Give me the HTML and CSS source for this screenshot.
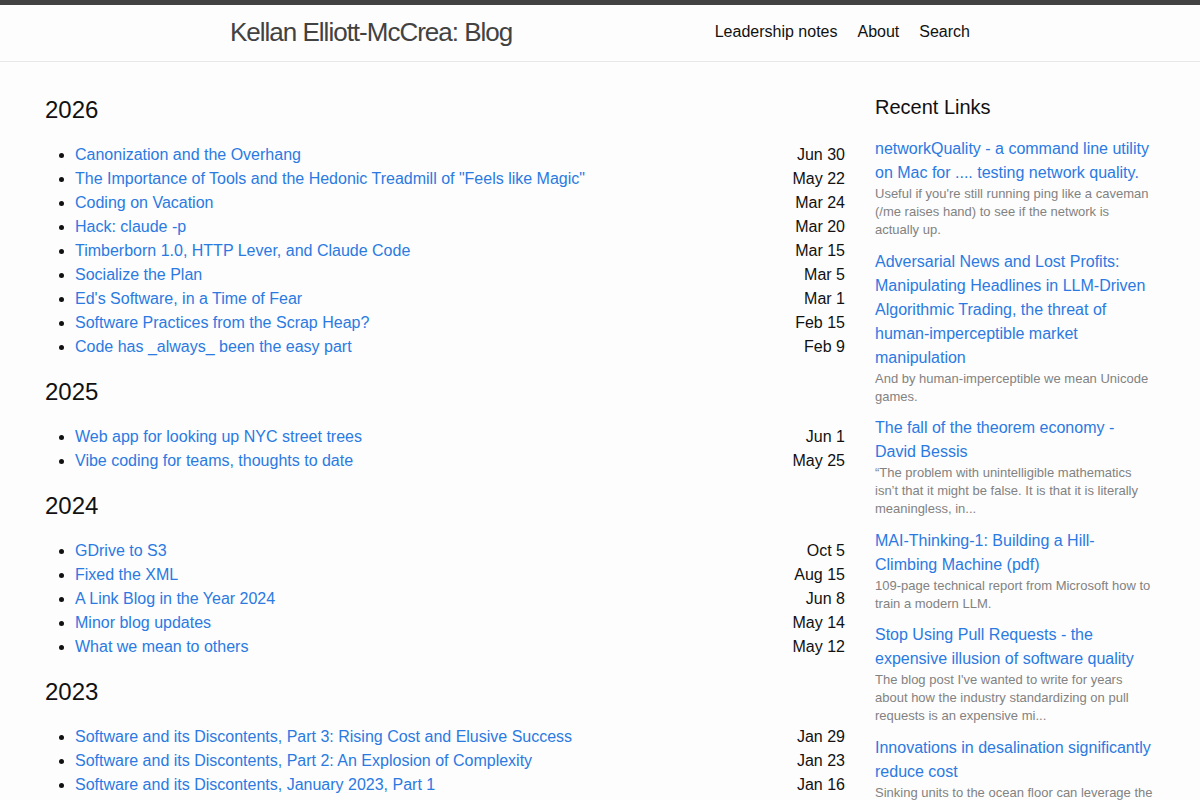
FILE: index.html
```html
<!DOCTYPE html>
<html lang="en">
<head>
<meta charset="utf-8">
<title>Kellan Elliott-McCrea: Blog</title>
<link rel="stylesheet" href="styles.css">
</head>
<body>
<header class="site-header">
  <div class="header-wrap">
    <a class="site-title" href="#">Kellan Elliott-McCrea: Blog</a>
    <nav class="site-nav">
      <a href="#">Leadership notes</a>
      <a href="#">About</a>
      <a href="#">Search</a>
    </nav>
  </div>
</header>
<main class="page">
  <section class="posts">
    <h2 class="year">2026</h2>
    <ul class="post-list">
      <li><a href="#">Canonization and the Overhang</a><span class="date">Jun 30</span></li>
      <li><a href="#">The Importance of Tools and the Hedonic Treadmill of "Feels like Magic"</a><span class="date">May 22</span></li>
      <li><a href="#">Coding on Vacation</a><span class="date">Mar 24</span></li>
      <li><a href="#">Hack: claude -p</a><span class="date">Mar 20</span></li>
      <li><a href="#">Timberborn 1.0, HTTP Lever, and Claude Code</a><span class="date">Mar 15</span></li>
      <li><a href="#">Socialize the Plan</a><span class="date">Mar 5</span></li>
      <li><a href="#">Ed's Software, in a Time of Fear</a><span class="date">Mar 1</span></li>
      <li><a href="#">Software Practices from the Scrap Heap?</a><span class="date">Feb 15</span></li>
      <li><a href="#">Code has _always_ been the easy part</a><span class="date">Feb 9</span></li>
    </ul>
    <h2 class="year">2025</h2>
    <ul class="post-list">
      <li><a href="#">Web app for looking up NYC street trees</a><span class="date">Jun 1</span></li>
      <li><a href="#">Vibe coding for teams, thoughts to date</a><span class="date">May 25</span></li>
    </ul>
    <h2 class="year">2024</h2>
    <ul class="post-list">
      <li><a href="#">GDrive to S3</a><span class="date">Oct 5</span></li>
      <li><a href="#">Fixed the XML</a><span class="date">Aug 15</span></li>
      <li><a href="#">A Link Blog in the Year 2024</a><span class="date">Jun 8</span></li>
      <li><a href="#">Minor blog updates</a><span class="date">May 14</span></li>
      <li><a href="#">What we mean to others</a><span class="date">May 12</span></li>
    </ul>
    <h2 class="year">2023</h2>
    <ul class="post-list">
      <li><a href="#">Software and its Discontents, Part 3: Rising Cost and Elusive Success</a><span class="date">Jan 29</span></li>
      <li><a href="#">Software and its Discontents, Part 2: An Explosion of Complexity</a><span class="date">Jan 23</span></li>
      <li><a href="#">Software and its Discontents, January 2023, Part 1</a><span class="date">Jan 16</span></li>
    </ul>
  </section>
  <aside class="links">
    <h3 class="links-title">Recent Links</h3>
    <div class="link-item">
      <a href="#">networkQuality - a command line utility on Mac for .... testing network quality.</a>
      <p>Useful if you're still running ping like a caveman (/me raises hand) to see if the network is actually up.</p>
    </div>
    <div class="link-item">
      <a href="#">Adversarial News and Lost Profits: Manipulating Headlines in LLM-Driven Algorithmic Trading, the threat of human-imperceptible market manipulation</a>
      <p>And by human-imperceptible we mean Unicode games.</p>
    </div>
    <div class="link-item">
      <a href="#">The fall of the theorem economy - David Bessis</a>
      <p>“The problem with unintelligible mathematics isn’t that it might be false. It is that it is literally meaningless, in...</p>
    </div>
    <div class="link-item">
      <a href="#">MAI-Thinking-1: Building a Hill-Climbing Machine (pdf)</a>
      <p>109-page technical report from Microsoft how to train a modern LLM.</p>
    </div>
    <div class="link-item">
      <a href="#">Stop Using Pull Requests - the expensive illusion of software quality</a>
      <p>The blog post I've wanted to write for years about how the industry standardizing on pull requests is an expensive mi...</p>
    </div>
    <div class="link-item">
      <a href="#">Innovations in desalination significantly reduce cost</a>
      <p>Sinking units to the ocean floor can leverage the natural pressure of the deep sea to...</p>
    </div>
  </aside>
</main>
</body>
</html>
```
FILE: styles.css
```css
html, body {
  margin: 0;
  padding: 0;
}
body {
  background: #fdfdfd;
  color: #111;
  font-family: "Liberation Sans", Arial, sans-serif;
  font-size: 16px;
  line-height: 1.5;
}
a {
  color: #2a7ae2;
  text-decoration: none;
}
.site-header {
  border-top: 5px solid #424242;
  border-bottom: 1px solid #e8e8e8;
}
.header-wrap {
  width: 740px;
  margin: 0 auto;
  display: flex;
  justify-content: space-between;
  align-items: center;
  height: 56px;
  box-sizing: border-box;
  padding-bottom: 2px;
}
.site-title {
  font-size: 26px;
  font-weight: 300;
  letter-spacing: -1px;
  line-height: 54px;
  color: #424242;
}
.site-nav {
  display: flex;
  gap: 20px;
  line-height: 54px;
}
.site-nav a {
  color: #111;
}
.page {
  width: 1110px;
  margin: 0 auto;
  padding: 30px 0;
  display: flex;
  gap: 30px;
  align-items: flex-start;
}
.posts {
  width: 800px;
  flex: none;
}
.year {
  font-size: 24px;
  font-weight: 400;
  line-height: 36px;
  margin: 0 0 15px;
}
.post-list {
  margin: 0 0 15px;
  padding-left: 30px;
  line-height: 24px;
}
.post-list li {
  list-style: disc;
}
.post-list li .date {
  float: right;
}
.links {
  width: 280px;
  flex: none;
}
.links-title {
  font-size: 20px;
  font-weight: 400;
  line-height: 30px;
  margin: 0 0 15px;
  color: #111;
}
.link-item {
  margin-bottom: 10.5px;
}
.link-item a {
  display: block;
  line-height: 24px;
}
.link-item p {
  margin: 0;
  font-size: 13px;
  line-height: 18px;
  color: #828282;
}
```
